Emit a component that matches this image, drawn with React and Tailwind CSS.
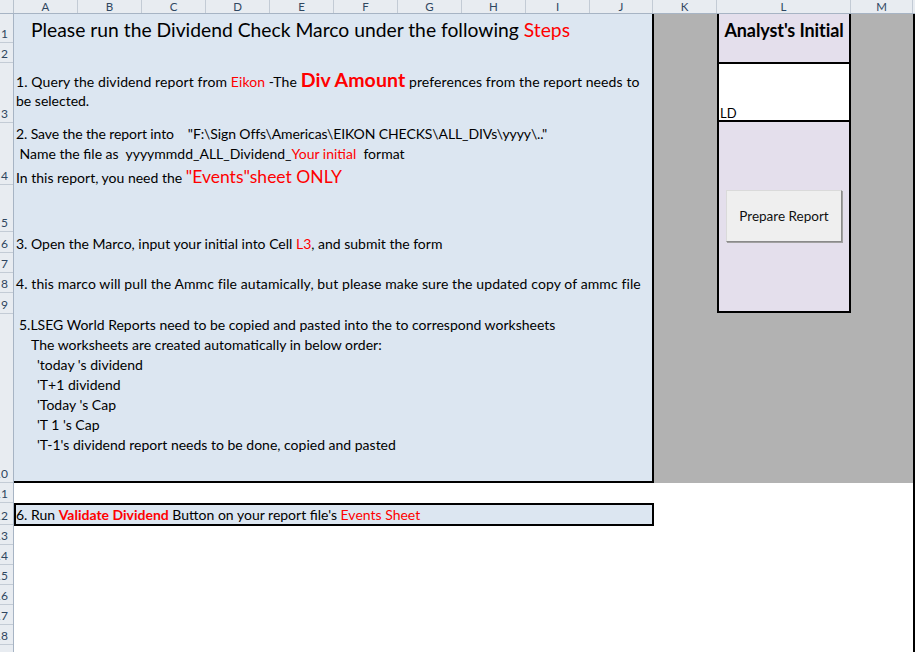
import React from "react";

const cols = [
  { l: "A", w: "w-[64px]" },
  { l: "B", w: "w-[64px]" },
  { l: "C", w: "w-[64px]" },
  { l: "D", w: "w-[64px]" },
  { l: "E", w: "w-[64px]" },
  { l: "F", w: "w-[64px]" },
  { l: "G", w: "w-[64px]" },
  { l: "H", w: "w-[64px]" },
  { l: "I", w: "w-[64px]" },
  { l: "J", w: "w-[63px]" },
  { l: "K", w: "w-[64px]" },
  { l: "L", w: "w-[134px]" },
  { l: "M", w: "w-[62px]" },
];

const rows = [
  { n: 1, h: "h-[29px]" },
  { n: 2, h: "h-[20px]" },
  { n: 3, h: "h-[60px]" },
  { n: 4, h: "h-[62px]" },
  { n: 5, h: "h-[47px]" },
  { n: 6, h: "h-[21px]" },
  { n: 7, h: "h-[20px]" },
  { n: 8, h: "h-[20px]" },
  { n: 9, h: "h-[21px]" },
  { n: 10, h: "h-[169px]" },
  { n: 11, h: "h-[20px]" },
  { n: 12, h: "h-[22px]" },
  { n: 13, h: "h-[20px]" },
  { n: 14, h: "h-[20px]" },
  { n: 15, h: "h-[20px]" },
  { n: 16, h: "h-[20px]" },
  { n: 17, h: "h-[20px]" },
  { n: 18, h: "h-[20px]" },
  { n: 19, h: "h-[20px]" },
];

const R = ({ children, className = "" }) => (
  <span className={"text-[#ff0000] " + className}>{children}</span>
);

export default function App() {
  return (
    <div className="w-[915px] h-[652px] overflow-hidden bg-white text-black font-['Lato',sans-serif] text-[14px] leading-[20px]">
      {/* column header */}
      <div className="flex h-[14px] bg-[#e8ecf1] border-b border-[#a7b4c4] text-[11.5px] leading-[13px] text-[#2f4660]">
        <div className="w-[14px] shrink-0 border-r border-[#b8c2cd]" />
        {cols.map((c) => (
          <div
            key={c.l}
            className={c.w + " shrink-0 border-r border-[#c3cbd5] text-center"}
          >
            {c.l}
          </div>
        ))}
        <div className="flex-1" />
      </div>

      <div className="flex">
        {/* row header */}
        <div className="w-[14px] shrink-0 flex flex-col bg-[#e8ecf1] border-r border-[#a7b4c4] text-[12px] leading-[13px] text-[#2f4660]">
          {rows.map((r) => (
            <div
              key={r.n}
              className={
                r.h +
                " shrink-0 overflow-hidden border-b border-[#c3cbd5] flex items-end justify-end pb-[2px] pr-[5px] whitespace-nowrap"
              }
            >
              {r.n}
            </div>
          ))}
        </div>

        {/* sheet */}
        <div className="flex-1 flex flex-col border-r-2 border-black h-[638px]">
          <div className="flex h-[469px]">
            {/* blue instructions panel */}
            <div className="w-[640px] shrink-0 bg-[#dce6f1] border-r-2 border-b-2 border-black flex flex-col whitespace-pre">
              <div className="h-[29px] pl-[17px] pt-[1px] text-[19.3px] leading-[29px]">
                Please run the Dividend Check Marco under the following <R>Steps</R>
              </div>
              <div className="h-[20px]" />
              <div className="h-[60px] pl-[2px] pt-[5px]">
                <div className="leading-[23px] h-[23px] tracking-[0.1px]">
                  1. Query the dividend report from <R>Eikon</R> -The{" "}
                  <R className="font-bold text-[19.5px]">Div Amount</R> preferences from the report needs to
                </div>
                <div>be selected.</div>
              </div>
              <div className="h-[62px] pl-[2px] pt-[1px]">
                <div className="tracking-[-0.1px]">2. Save the the report into    "F:\Sign Offs\Americas\EIKON CHECKS\ALL_DIVs\yyyy\.."</div>
                <div> Name the file as  yyyymmdd_ALL_Dividend_<R>Your initial</R>  format</div>
                <div className="leading-[26px]">
                  In this report, you need the <R className="text-[17.5px]">"Events"sheet ONLY</R>
                </div>
              </div>
              <div className="h-[47px]" />
              <div className="h-[21px] pl-[2px] pt-[2px]">
                3. Open the Marco, input your initial into Cell <R>L3</R>, and submit the form
              </div>
              <div className="h-[20px]" />
              <div className="h-[20px] pl-[2px] pt-[1px] tracking-[0.1px]">
                4. this marco will pull the Ammc file autamically, but please make sure the updated copy of ammc file
              </div>
              <div className="h-[21px]" />
              <div className="flex-1 pl-[5px] pt-[1px]">
                <div>5.LSEG World Reports need to be copied and pasted into the to correspond worksheets</div>
                <div className="pl-[12px]">The worksheets are created automatically in below order:</div>
                <div className="pl-[18px]">'today 's dividend</div>
                <div className="pl-[18px]">'T+1 dividend</div>
                <div className="pl-[18px]">'Today 's Cap</div>
                <div className="pl-[18px]">'T 1 's Cap</div>
                <div className="pl-[18px]">'T-1's dividend report needs to be done, copied and pasted</div>
              </div>
            </div>

            {/* gray side with analyst box */}
            <div className="flex-1 bg-[#b2b2b2] pl-[63px]">
              <div className="w-[134px] h-[299px] border-x-2 border-b-2 border-black flex flex-col">
                <div className="h-[48px] bg-[#e4dfec] text-center font-bold text-[18px] leading-[20px] pt-[6px] whitespace-nowrap tracking-[-0.1px]">
                  Analyst's Initial
                </div>
                <div className="h-[60px] bg-white border-y-2 border-black flex items-end pl-[1px] text-[13px] leading-[14px] pb-0">
                  LD
                </div>
                <div className="flex-1 bg-[#e4dfec] pl-[7px] pt-[68px]">
                  <button className="w-[116px] h-[52px] bg-[#efefef] border border-t-[#dadada] border-l-[#dadada] border-r-[#8a8a8a] border-b-[#8a8a8a] shadow-[1px_1px_0_#a0a0a0] text-[13.5px] text-[#111] font-['Lato',sans-serif]">
                    Prepare Report
                  </button>
                </div>
              </div>
            </div>
          </div>

          <div className="h-[20px]" />

          <div className="w-[640px] h-[23px] bg-[#dce6f1] border-2 border-black flex items-center pl-0 text-[14px] leading-[19px] whitespace-pre">
            6. Run <R className="font-bold">Validate Dividend</R> Button on your report file's <R>Events Sheet</R>
          </div>
        </div>
      </div>
    </div>
  );
}
